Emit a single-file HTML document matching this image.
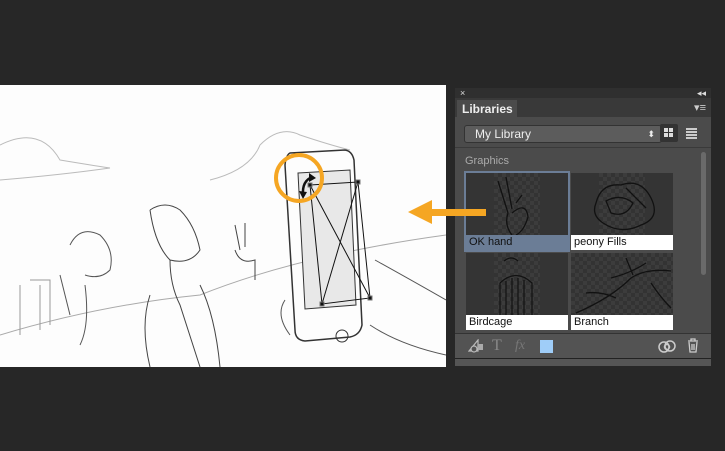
<!DOCTYPE html>
<html><head><style>
body{margin:0;width:725px;height:451px;background:#272727;position:relative;overflow:hidden;font-family:"Liberation Sans",sans-serif}
.a{position:absolute}
.lbl{position:absolute;left:0;right:0;bottom:0;height:15px;background:#fff;color:#111;font-size:11px;line-height:15px;padding-left:3px}
.tile{position:absolute;width:102px;height:77px;background:#343434;overflow:hidden}
.chk{position:absolute;top:0;bottom:15px;left:28px;right:28px;background-color:#3c3c3c;background-image:linear-gradient(45deg,#333 25%,transparent 25%,transparent 75%,#333 75%),linear-gradient(45deg,#333 25%,transparent 25%,transparent 75%,#333 75%);background-size:8px 8px;background-position:0 0,4px 4px}
.tile svg{position:absolute;left:0;top:0}
</style></head><body>
<div class="a" style="left:0;top:85px;width:446px;height:282px;background:#fdfdfd"></div>
<svg class="a" style="left:0;top:85px" width="446" height="282" viewBox="0 0 446 282" fill="none" stroke="#777" stroke-width="1">
<path d="M0 60 Q40 40 60 75 Q90 80 110 83 M0 95 Q60 90 110 83" stroke="#bbb"/>
<path d="M210 95 Q250 85 260 60 Q280 40 300 50 Q330 60 350 65" stroke="#bbb"/>
<path d="M0 250 Q100 220 200 210 Q300 170 446 150" stroke="#aaa"/>
<path d="M20 200 L20 250 M30 195 L50 195 L50 240 M40 200 L40 245" stroke="#999"/>
<path d="M70 160 Q80 140 100 150 Q115 165 110 185 Q100 195 85 190 M60 190 L70 230 M85 200 Q90 240 80 260" stroke="#555"/>
<path d="M150 125 Q165 115 180 125 Q195 140 200 165 Q190 180 170 175 Q155 160 150 125 M170 175 Q170 200 180 220 L200 282 M150 210 Q140 240 150 282 M200 200 Q215 230 220 282" stroke="#444"/>
<path d="M235 140 L240 165 M245 138 L245 162 M235 165 Q240 180 255 175 L255 195" stroke="#444"/>
<path d="M290 68 L345 65 Q352 66 354 75 L362 240 Q360 250 350 252 L305 256 Q295 255 295 245 L285 80 Q286 70 290 68Z" stroke="#333" stroke-width="1.5"/>
<path d="M298 88 L350 85 L356 220 L305 224Z" fill="#e8e8e8" stroke="#333"/>
<path d="M310 100 L358 97 L370 213 L322 219Z M310 100 L370 213 M358 97 L322 219" stroke="#111"/>
<rect x="308" y="98" width="4" height="4" fill="#111"/><rect x="356" y="95" width="4" height="4" fill="#111"/><rect x="320" y="217" width="4" height="4" fill="#111"/><rect x="368" y="211" width="4" height="4" fill="#111"/>
<path d="M303 110 Q302 96 312 92" stroke="#111" stroke-width="2.5"/><path d="M309 88 L316 93 L309 97Z M299 106 L303 114 L307 107Z" fill="#111" stroke="none"/>
<circle cx="342" cy="251" r="6" stroke="#333"/>
<path d="M285 215 Q275 230 290 250 M375 175 Q420 200 446 215 M370 240 Q400 260 446 270" stroke="#555"/>
</svg>
<div class="a" style="left:274px;top:153px;width:50px;height:50px;border:4px solid #f5a623;border-radius:50%;box-sizing:border-box"></div>

<div class="a" style="left:455px;top:88px;width:256px;height:278px;background:#4b4b4b">
 <div class="a" style="left:0;top:0;width:256px;height:10px;background:#2f2f2f;color:#ddd;font-size:9px;line-height:10px"><span style="margin-left:5px">×</span><span style="position:absolute;right:5px">◂◂</span></div>
 <div class="a" style="left:0;top:10px;width:256px;height:19px;background:#393939"></div>
 <div class="a" style="left:2px;top:12px;width:60px;height:18px;background:#4b4b4b;color:#eee;font-size:12px;font-weight:bold;line-height:18px;padding-left:5px;box-sizing:border-box">Libraries</div>
 <div class="a" style="right:5px;top:13px;color:#ccc;font-size:11px">▾≡</div>
 <div class="a" style="left:9px;top:37px;width:186px;height:16px;background:#5c5c5c;border:1px solid #333;border-radius:3px;color:#eee;font-size:12px;line-height:16px;padding-left:10px;box-sizing:content-box">My Library<span style="position:absolute;right:6px;font-size:9px">⬍</span></div>
 <div class="a" style="left:205px;top:36px;width:18px;height:18px;background:#333;border-radius:2px"></div>
 <div class="a" style="left:209px;top:40px;width:4px;height:4px;background:#ddd;box-shadow:5px 0 #ddd,0 5px #ddd,5px 5px #ddd"></div>
 <div class="a" style="left:231px;top:40px;width:11px;height:2px;background:#ccc;box-shadow:0 3px #ccc,0 6px #ccc,0 9px #ccc"></div>
 <div class="a" style="left:0;top:59px;width:256px;height:1px;background:#3a3a3a"></div>
 <div class="a" style="left:10px;top:67px;color:#aaa;font-size:11px">Graphics</div>
 <div class="tile" style="left:11px;top:85px;outline:2px solid #6b7d96"><div class="chk"></div>
  <svg width="102" height="62" fill="none" stroke="#111" stroke-width="1.3"><path d="M32 8 L42 40 M40 4 L46 36 M46 40 Q60 28 62 44 Q58 58 50 62 M42 40 Q38 52 46 62 M50 30 L56 22"/></svg>
  <div class="lbl" style="background:#6b7d96">OK hand</div></div>
 <div class="tile" style="left:116px;top:85px"><div class="chk"></div>
  <svg width="102" height="62" fill="none" stroke="#111" stroke-width="1.3"><path d="M25 30 Q30 10 50 12 Q70 5 80 25 Q90 45 70 52 Q50 62 32 50 Q20 42 25 30Z M35 28 Q50 20 62 30 Q55 45 40 40Z M55 15 Q65 25 75 35"/></svg>
  <div class="lbl">peony Fills</div></div>
 <div class="tile" style="left:11px;top:165px"><div class="chk"></div>
  <svg width="102" height="62" fill="none" stroke="#111" stroke-width="1.2"><path d="M38 8 Q45 2 52 8 M34 30 Q50 15 66 30 L66 62 M34 30 L34 62 M40 28 L40 62 M46 25 L46 62 M52 25 L52 62 M58 27 L58 62"/></svg>
  <div class="lbl">Birdcage</div></div>
 <div class="tile" style="left:116px;top:165px"><div class="chk" style="left:0;right:0"></div>
  <svg width="102" height="62" fill="none" stroke="#111" stroke-width="1.3"><path d="M5 60 Q40 45 60 25 Q75 15 100 18 M40 25 Q60 20 75 10 M55 5 L62 22 M15 40 Q30 38 45 45 M80 30 Q90 45 100 55"/></svg>
  <div class="lbl">Branch</div></div>
 <div class="a" style="left:246px;top:64px;width:5px;height:123px;background:#6a6a6a;border-radius:3px"></div>
 <div class="a" style="left:0;top:245px;width:256px;height:1px;background:#333"></div>
 <div class="a" style="left:0;top:246px;width:256px;height:24px;background:#535353"></div>
 <svg class="a" style="left:13px;top:251px" width="16" height="14" fill="none" stroke="#bbb" stroke-width="1.2"><path d="M1 12 L10 1 L10 12Z"/><circle cx="6" cy="10" r="3" fill="#535353"/><rect x="10" y="5" width="5" height="6" fill="#aaa" stroke="none"/></svg>
 <div class="a" style="left:37px;top:249px;color:#888;font-size:16px;font-family:'Liberation Serif',serif">T</div>
 <div class="a" style="left:60px;top:250px;color:#777;font-size:14px;font-style:italic;font-family:'Liberation Serif',serif">fx</div>
 <div class="a" style="left:85px;top:252px;width:13px;height:13px;background:#9fcdf8"></div>
 <svg class="a" style="left:203px;top:251px" width="18" height="14" fill="none" stroke="#ccc" stroke-width="1.5"><circle cx="6" cy="8" r="5"/><circle cx="12" cy="7" r="5"/><circle cx="9" cy="8" r="2.5"/></svg>
 <svg class="a" style="left:232px;top:250px" width="12" height="15" fill="none" stroke="#ccc" stroke-width="1.3"><path d="M1 3 L11 3 M4 3 L4 1 L8 1 L8 3 M2 4 L3 14 L9 14 L10 4 M5 6 L5 12 M7 6 L7 12"/></svg>
 <div class="a" style="left:0;top:270px;width:256px;height:1px;background:#222"></div>
 <div class="a" style="left:0;top:271px;width:256px;height:7px;background:#555"></div>
</div>
<div class="a" style="left:428px;top:209px;width:58px;height:7px;background:#f5a623"></div>
<div class="a" style="left:408px;top:200px;width:0;height:0;border-top:12px solid transparent;border-bottom:12px solid transparent;border-right:24px solid #f5a623"></div>
</body></html>
